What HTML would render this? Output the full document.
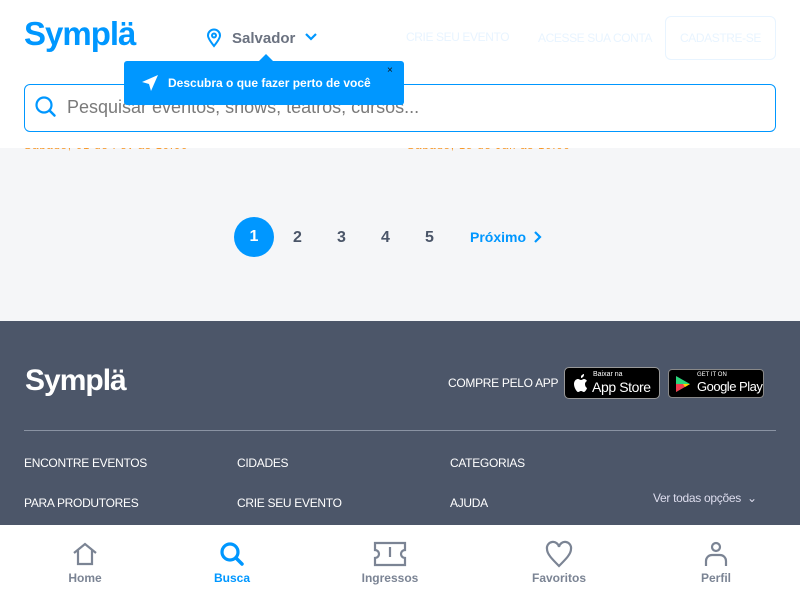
<!DOCTYPE html>
<html><head><meta charset="utf-8"><style>
*{margin:0;padding:0;box-sizing:border-box}
body{width:800px;height:600px;overflow:hidden;background:#f5f6f8;font-family:"Liberation Sans",sans-serif;position:relative}
.abs{position:absolute;white-space:nowrap}
.header{left:0;top:0;width:800px;height:148px;background:#fff}
.logo{font-weight:bold;font-size:33px;letter-spacing:-1px;color:#0097ff}
.nav{font-size:12px;color:#e8f4ff;text-transform:uppercase}
.pg{font-size:16px;font-weight:bold;color:#4a5568}
.footer{left:0;top:321px;width:800px;height:204px;background:#4c5669}
.fl{font-size:12px;color:#fff;letter-spacing:-0.3px}
.tab{top:525px;left:0;width:800px;height:75px;background:#fff}
.tl{font-size:12px;font-weight:bold;color:#7b8494;text-align:center;width:100px}
</style></head><body>
<div class="abs" style="left:24px;top:140px;font-size:11px;color:#f7931e;letter-spacing:1px">Sábado, 01 de Fev às 10:00</div>
<div class="abs" style="left:407px;top:140px;font-size:11px;color:#f7931e;letter-spacing:1px">Sábado, 15 de Jan às 10:00</div>
<div class="abs header"></div>
<div class="abs logo" style="left:24px;top:15px">Symplä</div>
<svg class="abs" style="left:205px;top:28px" width="18" height="20" viewBox="0 0 18 20"><path d="M9 18C5 13 3 10 3 7.5a6 6 0 0112 0C15 10 13 13 9 18z" fill="none" stroke="#0097ff" stroke-width="2"/><circle cx="9" cy="7.5" r="2" fill="none" stroke="#0097ff" stroke-width="2"/></svg>
<div class="abs" style="left:232px;top:30px;font-size:15px;font-weight:bold;color:#6b7280">Salvador</div>
<svg class="abs" style="left:304px;top:32px" width="14" height="10"><path d="M2 2l5 5 5-5" fill="none" stroke="#0097ff" stroke-width="2.2"/></svg>
<div class="abs nav" style="left:406px;top:30px;letter-spacing:-0.4px">Crie seu evento</div>
<div class="abs nav" style="left:538px;top:31px;letter-spacing:-0.4px">Acesse sua conta</div>
<div class="abs nav" style="left:665px;top:16px;width:111px;height:44px;border:1px solid #e8f4ff;border-radius:6px;line-height:42px;text-align:center;letter-spacing:-0.4px">Cadastre-se</div>
<div class="abs" style="left:24px;top:84px;width:752px;height:48px;border:1px solid #0097ff;border-radius:6px;background:#fff"></div>
<svg class="abs" style="left:34px;top:95px" width="24" height="24"><circle cx="10" cy="10" r="7.5" fill="none" stroke="#0097ff" stroke-width="2.2"/><path d="M15.5 15.5l5 5" stroke="#0097ff" stroke-width="2.5" stroke-linecap="round"/></svg>
<div class="abs" style="left:67px;top:97px;font-size:18px;color:#7a7a7a">Pesquisar eventos, shows, teatros, cursos...</div>
<div class="abs" style="left:124px;top:61px;width:280px;height:44px;background:#0097ff;border-radius:3px"></div>
<div class="abs" style="left:258px;top:54px;width:0;height:0;border-left:8px solid transparent;border-right:8px solid transparent;border-bottom:8px solid #0097ff"></div>
<svg class="abs" style="left:141px;top:74px" width="18" height="18"><path d="M17 1L1 8l7 2 2 7z" fill="#fff"/></svg>
<div class="abs" style="left:168px;top:76px;font-size:12px;font-weight:bold;color:#fff">Descubra o que fazer perto de você</div>
<div class="abs" style="left:387px;top:65px;font-size:10px;color:#111">×</div>
<div class="abs" style="left:234px;top:217px;width:40px;height:40px;border-radius:50%;background:#0097ff;color:#fff;font-weight:bold;font-size:16px;text-align:center;line-height:40px">1</div>
<div class="abs pg" style="left:293px;top:229px">2</div>
<div class="abs pg" style="left:337px;top:229px">3</div>
<div class="abs pg" style="left:381px;top:229px">4</div>
<div class="abs pg" style="left:425px;top:229px">5</div>
<div class="abs" style="left:470px;top:229px;font-size:14px;font-weight:bold;color:#0097ff">Próximo</div>
<svg class="abs" style="left:533px;top:230px" width="10" height="14"><path d="M2 2l5 5-5 5" fill="none" stroke="#0097ff" stroke-width="2.2"/></svg>
<div class="abs footer"></div>
<div class="abs logo" style="left:25px;top:364px;font-size:30px;color:#fff">Symplä</div>
<div class="abs fl" style="left:448px;top:376px">COMPRE PELO APP</div>
<div class="abs" style="left:564px;top:367px;width:96px;height:32px;background:#000;border:1px solid #999;border-radius:5px;color:#fff"><svg class="abs" style="left:7px;top:6px" width="16" height="19" viewBox="0 0 16 19"><path d="M13 10c0-2 2-3 2-3-1-2-3-2-3-2-1 0-2 1-3 1S7 5 6 5C4 5 2 7 2 10c0 4 3 8 4 8s2-1 3-1 2 1 3 1c1 0 3-3 3-4 0 0-2-1-2-4zM11 3c1-1 1-2 1-3-1 0-2 1-3 2 0 1 0 2 0 2 1 0 2-1 2-1z" fill="#fff"/></svg><span class="abs" style="left:28px;top:3px;font-size:7px">Baixar na</span><span class="abs" style="left:27px;top:11px;font-size:14px;letter-spacing:-0.4px">App Store</span></div>
<div class="abs" style="left:668px;top:369px;width:96px;height:29px;background:#000;border:1px solid #888;border-radius:4px;color:#fff"><svg class="abs" style="left:5px;top:5px" width="18" height="18"><path d="M2 1l14 8-14 8z" fill="#2bd67b"/><path d="M2 9h14l-14 8z" fill="#f23c4f"/><path d="M9 9l7 0-5 3z" fill="#ffd400"/></svg><span class="abs" style="left:28px;top:2px;font-size:6px">GET IT ON</span><span class="abs" style="left:28px;top:9px;font-size:13px;letter-spacing:-0.5px">Google Play</span></div>
<div class="abs" style="left:24px;top:430px;width:752px;height:1px;background:#8a93a3"></div>
<div class="abs fl" style="left:24px;top:456px">ENCONTRE EVENTOS</div>
<div class="abs fl" style="left:237px;top:456px">CIDADES</div>
<div class="abs fl" style="left:450px;top:456px">CATEGORIAS</div>
<div class="abs fl" style="left:24px;top:496px">PARA PRODUTORES</div>
<div class="abs fl" style="left:237px;top:496px">CRIE SEU EVENTO</div>
<div class="abs fl" style="left:450px;top:496px">AJUDA</div>
<div class="abs fl" style="left:653px;top:491px;color:#dde">Ver todas opções &nbsp;⌄</div>
<div class="abs tab"></div>
<svg class="abs" style="left:71px;top:541px" width="28" height="26"><path d="M3 12L14 3l11 9M7 9v14h14V9" fill="none" stroke="#7b8494" stroke-width="2.2"/></svg>
<svg class="abs" style="left:218px;top:540px" width="28" height="28"><circle cx="12" cy="12" r="8" fill="none" stroke="#0097ff" stroke-width="3.2"/><path d="M18 18l6 6" stroke="#0097ff" stroke-width="3.5" stroke-linecap="round"/></svg>
<svg class="abs" style="left:373px;top:541px" width="34" height="26"><path d="M2 2h30v7a4 4 0 000 8v7H2v-7a4 4 0 000-8z" fill="none" stroke="#7b8494" stroke-width="2.2"/><path d="M17 6v10" stroke="#7b8494" stroke-width="2.2"/></svg>
<svg class="abs" style="left:544px;top:540px" width="30" height="28"><path d="M15 26C8 19 3 14 3 9a6 6 0 0112-2 6 6 0 0112 2c0 5-5 10-12 17z" fill="none" stroke="#7b8494" stroke-width="2.2"/></svg>
<svg class="abs" style="left:702px;top:541px" width="28" height="26"><circle cx="14" cy="6" r="4" fill="none" stroke="#7b8494" stroke-width="2.2"/><path d="M4 25v-5a6 6 0 016-6h8a6 6 0 016 6v5" fill="none" stroke="#7b8494" stroke-width="2.2"/></svg>
<div class="abs tl" style="left:35px;top:571px">Home</div>
<div class="abs tl" style="left:182px;top:571px;color:#0097ff">Busca</div>
<div class="abs tl" style="left:340px;top:571px">Ingressos</div>
<div class="abs tl" style="left:509px;top:571px">Favoritos</div>
<div class="abs tl" style="left:666px;top:571px">Perfil</div>
</body></html>
